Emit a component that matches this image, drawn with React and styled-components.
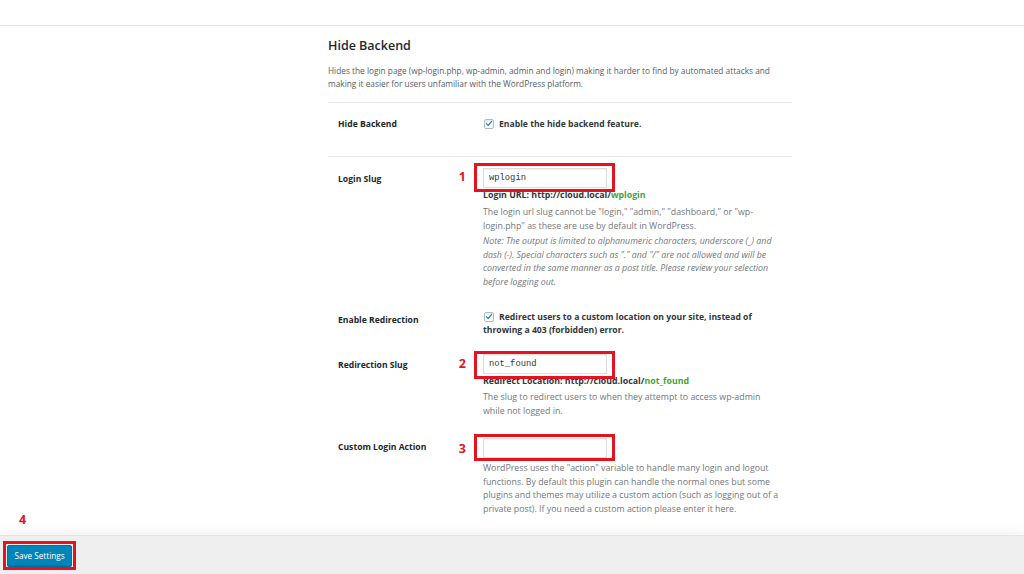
import React from 'react';
import styled, { createGlobalStyle } from 'styled-components';

const GlobalStyle = createGlobalStyle`
  html, body {
    margin: 0;
    padding: 0;
    background: #fff;
    font-family: "Open Sans", "Liberation Sans", Arial, sans-serif;
    color: #23282d;
  }
  * { box-sizing: border-box; }
`;

const Page = styled.div`
  display: flex;
  flex-direction: column;
  height: 100vh;
  overflow: hidden;
`;

const TopBar = styled.div`
  height: 26px;
  flex: none;
  border-bottom: 1px solid #e5e5e5;
`;

const Main = styled.main`
  flex: 1;
  overflow: hidden;
  padding: 11px 0 0 328px;
`;

const Section = styled.section`
  width: 464px;
`;

const Title = styled.h2`
  margin: 0 0 10px;
  font-size: 12.5px;
  line-height: 17px;
  font-weight: 600;
  color: #23282d;
`;

const Intro = styled.p`
  margin: 0 0 12px;
  font-size: 8.3px;
  line-height: 13px;
  color: #555d66;
`;

const Table = styled.div`
  border-top: 1px solid #e8e8e8;
`;

const Row = styled.div`
  display: grid;
  grid-template-columns: 155px 1fr;
  padding: ${p => p.$pad || '10px 0 10px'};
  border-bottom: ${p => (p.$divided ? '1px solid #e8e8e8' : 'none')};
`;

const Label = styled.div`
  padding: ${p => p.$offset || 0}px 0 0 10px;
  font-size: 8.6px;
  line-height: 13px;
  font-weight: 700;
  color: #23282d;
`;

const Field = styled.div`
  max-width: 300px;
  display: flex;
  flex-direction: column;
  align-items: flex-start;
`;

const CheckLabel = styled.label`
  display: block;
  font-size: 8.65px;
  line-height: 13px;
  font-weight: 700;
  color: #32373c;
`;

const Box = styled.span`
  display: inline-flex;
  align-items: center;
  justify-content: center;
  width: 10px;
  height: 10px;
  margin: 0 5px 0 1px;
  vertical-align: -1px;
  border: 1px solid #b4b9be;
  border-radius: 2px;
  background: #fff;
  box-shadow: inset 0 1px 2px rgba(0, 0, 0, 0.1);
`;

const Annotated = styled.span`
  position: relative;
  display: inline-block;
  &::after {
    content: '';
    position: absolute;
    inset: ${p => p.$inset || '-5px -8px -4px -9px'};
    border: 3px solid #e3141f;
    pointer-events: none;
  }
`;

const Marker = styled.span`
  position: absolute;
  top: ${p => p.$top || 2}px;
  right: ${p => (p.$left === undefined ? 'calc(100% + 17px)' : 'auto')};
  left: ${p => (p.$left === undefined ? 'auto' : `${p.$left}px`)};
  font-family: "Open Sans", "Liberation Sans", Arial, sans-serif;
  font-size: 12.5px;
  line-height: 16px;
  font-weight: 700;
  color: #e3141f;
`;

const Input = styled.input`
  display: block;
  width: 124px;
  height: 20px;
  margin: 0;
  padding: 0 5px;
  border: 1px solid #ddd;
  border-radius: 0;
  box-shadow: inset 0 1px 2px rgba(0, 0, 0, 0.07);
  background: #fff;
  font-family: "Liberation Mono", "DejaVu Sans Mono", monospace;
  font-size: 8.8px;
  color: #32373c;
  outline: none;
`;

const UrlLine = styled.div`
  margin-top: ${p => p.$gap || 1}px;
  font-size: 8.8px;
  line-height: 13px;
  font-weight: 700;
  color: #32373c;
`;

const Slug = styled.span`
  color: #46a33d;
`;

const Desc = styled.p`
  margin: ${p => p.$gap || 0}px 0 0;
  font-size: 8.8px;
  line-height: 13.5px;
  color: #72777c;
  font-style: ${p => (p.$italic ? 'italic' : 'normal')};
`;

const Footer = styled.footer`
  flex: none;
  display: flex;
  align-items: flex-start;
  height: 39px;
  padding: 9px 7px;
  background: #efefef;
  border-top: 1px solid #e4e4e4;
  box-shadow: 0 -4px 12px rgba(0, 0, 0, 0.05);
`;

const Button = styled.button`
  display: block;
  width: 65px;
  height: 21px;
  margin: 0;
  padding: 0;
  border: 1px solid #0073aa;
  border-radius: 2px;
  background: #0085ba;
  box-shadow: 0 1px 0 #006799;
  color: #fff;
  font-family: "Open Sans", "Liberation Sans", Arial, sans-serif;
  font-size: 8.2px;
  line-height: 19px;
  cursor: pointer;
`;

function Check() {
  return (
    <Box>
      <svg width="9" height="9" viewBox="0 0 20 20">
        <path d="M3.5 10.5 L8 15 L16.5 4.5" fill="none" stroke="#1e8cbe" strokeWidth="3" strokeLinecap="round" strokeLinejoin="round" />
      </svg>
    </Box>
  );
}

export default function App() {
  return (
    <Page>
      <GlobalStyle />
      <TopBar />
      <Main>
        <Section>
          <Title>Hide Backend</Title>
          <Intro>
            Hides the login page (wp-login.php, wp-admin, admin and login) making it harder to find by automated attacks and
            making it easier for users unfamiliar with the WordPress platform.
          </Intro>
          <Table>
            <Row $divided $pad="15px 0 25px">
              <Label>Hide Backend</Label>
              <Field>
                <CheckLabel><Check />Enable the hide backend feature.</CheckLabel>
              </Field>
            </Row>

            <Row $pad="11px 0 12px">
              <Label $offset={5}>Login Slug</Label>
              <Field>
                <Annotated>
                  <Marker $top={1}>1</Marker>
                  <Input defaultValue="wplogin" />
                </Annotated>
                <UrlLine $gap={1}>Login URL: http://cloud.local/<Slug>wplogin</Slug></UrlLine>
                <Desc $gap={4}>
                  The login url slug cannot be "login," "admin," "dashboard," or "wp-login.php" as these are use by default in WordPress.
                </Desc>
                <Desc $italic $gap={2}>
                  Note: The output is limited to alphanumeric characters, underscore (_) and dash (-). Special characters such as "." and "/" are not allowed and will be converted in the same manner as a post title. Please review your selection before logging out.
                </Desc>
              </Field>
            </Row>

            <Row $pad="10px 0 7px">
              <Label $offset={3}>Enable Redirection</Label>
              <Field>
                <CheckLabel><Check />Redirect users to a custom location on your site, instead of throwing a 403 (forbidden) error.</CheckLabel>
              </Field>
            </Row>

            <Row $pad="10px 0 10px">
              <Label $offset={5}>Redirection Slug</Label>
              <Field>
                <Annotated $inset="-3px -8px -5px -9px">
                  <Marker $top={2}>2</Marker>
                  <Input defaultValue="not_found" />
                </Annotated>
                <UrlLine $gap={1}>Redirect Location: http://cloud.local/<Slug>not_found</Slug></UrlLine>
                <Desc $gap={3}>
                  The slug to redirect users to when they attempt to access wp-admin while not logged in.
                </Desc>
              </Field>
            </Row>

            <Row $pad="10px 0 10px">
              <Label $offset={3}>Custom Login Action</Label>
              <Field>
                <Annotated $inset="-4px -8px -3px -9px">
                  <Marker $top={3}>3</Marker>
                  <Input defaultValue="" />
                </Annotated>
                <Desc $gap={4}>
                  WordPress uses the "action" variable to handle many login and logout functions. By default this plugin can handle the normal ones but some plugins and themes may utilize a custom action (such as logging out of a private post). If you need a custom action please enter it here.
                </Desc>
              </Field>
            </Row>
          </Table>
        </Section>
      </Main>
      <Footer>
        <Annotated $inset="-4px">
          <Marker $left={12} $top={-33}>4</Marker>
          <Button type="button">Save Settings</Button>
        </Annotated>
      </Footer>
    </Page>
  );
}
